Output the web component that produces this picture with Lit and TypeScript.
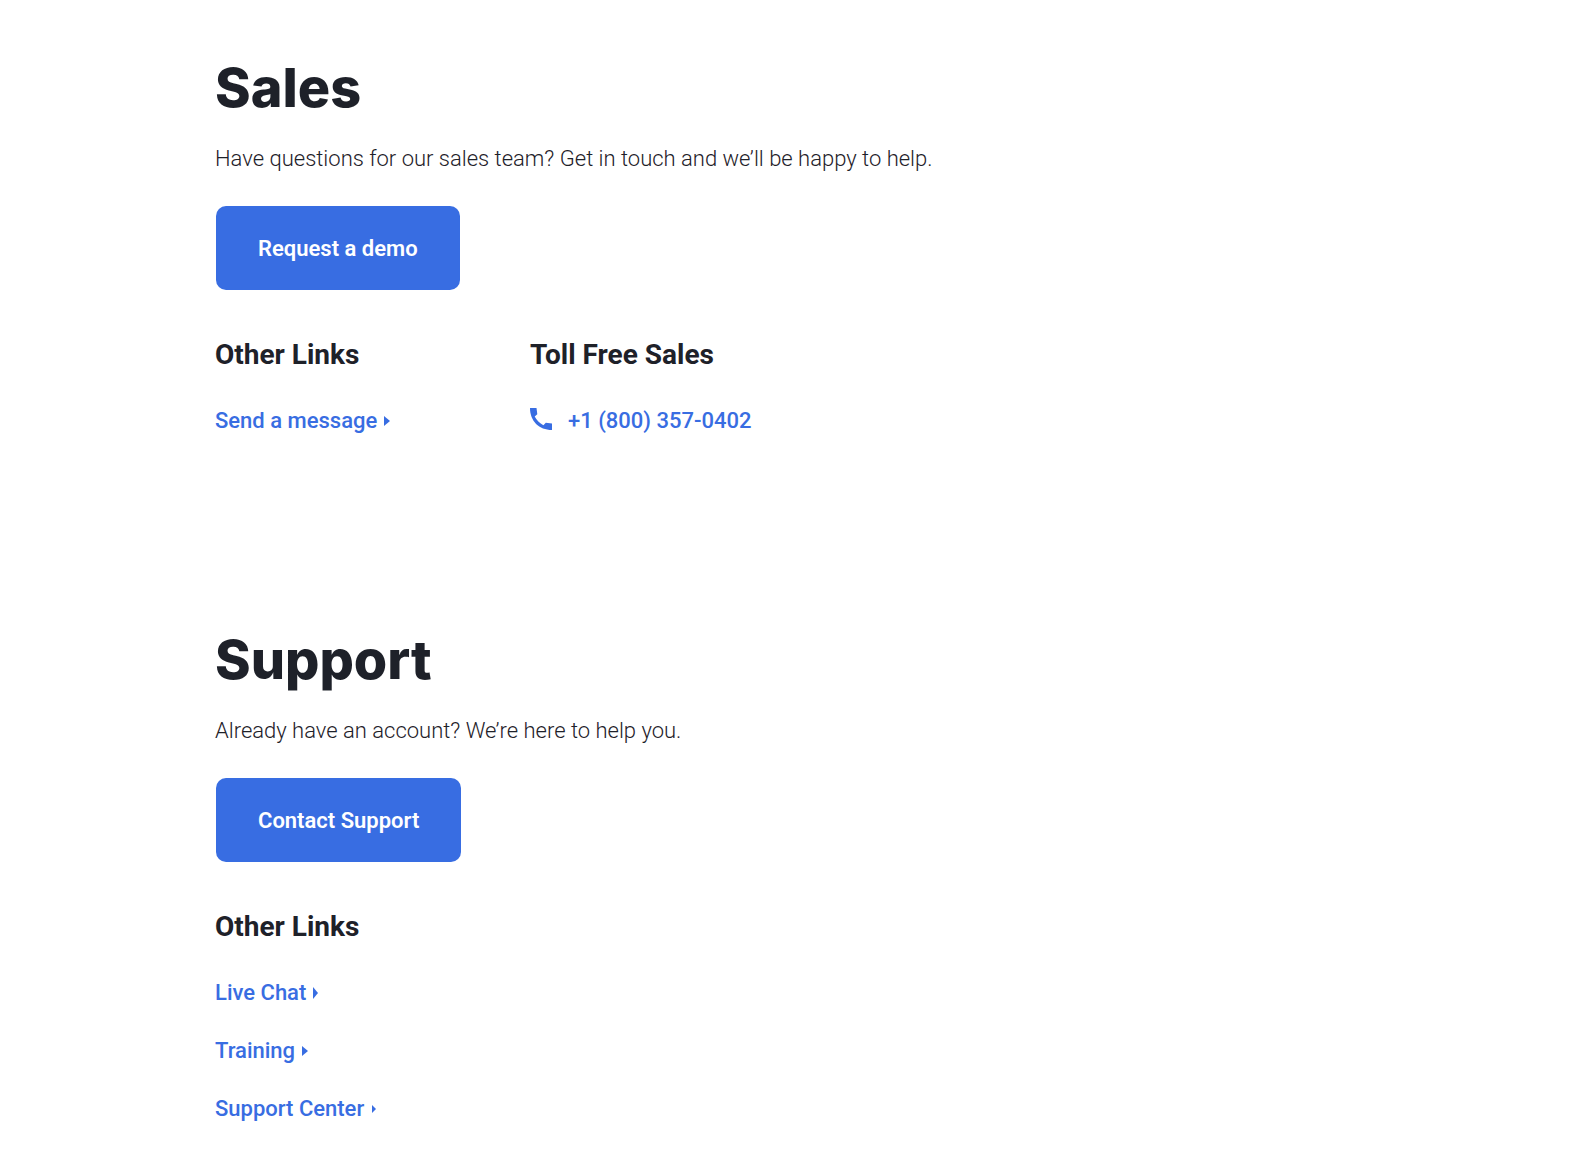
import { LitElement, html, css, svg } from "lit";
import { customElement, property } from "lit/decorators.js";

interface ArrowLink {
  label: string;
  href: string;
  arrow: string;
}

/* Arrow outlines in an 8 x 12 box. */
const ARROW_WIDE = "0,1 6,6 0,11";
const ARROW_TALL = "0,0 5,6 0,12";
const ARROW_SMALL = "1,2 5,6 1,10";

const salesLinks: ArrowLink[] = [
  { label: "Send a message", href: "#message", arrow: ARROW_WIDE },
];

const supportLinks: ArrowLink[] = [
  { label: "Live Chat", href: "#chat", arrow: ARROW_TALL },
  { label: "Training", href: "#training", arrow: ARROW_WIDE },
  { label: "Support Center", href: "#support-center", arrow: ARROW_SMALL },
];

@customElement("link-list")
export class LinkList extends LitElement {
  static styles = css`
    :host {
      display: block;
    }
    .list {
      display: grid;
      gap: 26px;
      margin: 0;
      padding: 0;
      list-style: none;
    }
    .link {
      display: inline-flex;
      align-items: center;
      gap: 7px;
      color: #386de2;
      font-size: 22px;
      line-height: 32px;
      font-weight: 500;
      text-decoration: none;
    }
    .link:hover {
      text-decoration: underline;
    }
    .item {
      display: flex;
    }
    .arrow {
      width: 8px;
      height: 12px;
      fill: currentColor;
    }
  `;

  @property({ attribute: false }) links: ArrowLink[] = [];

  render() {
    return html`
      <ul class="list">
        ${this.links.map(
          (l) => html`<li class="item">
            <a class="link" href=${l.href}
              >${l.label}<svg class="arrow" viewBox="0 0 8 12" aria-hidden="true">
                ${svg`<polygon points=${l.arrow}></polygon>`}
              </svg></a
            >
          </li>`
        )}
      </ul>
    `;
  }
}

@customElement("app-root")
export class AppRoot extends LitElement {
  static styles = css`
    :host {
      display: block;
      background: #fff;
      color: #1e2129;
      font-family: Roboto, "Noto Sans", sans-serif;
    }
    .page {
      padding: 52px 24px 32px 215px;
    }
    .section + .section {
      margin-top: 187px;
    }
    .title {
      margin: 0;
      font-family: Inter, sans-serif;
      font-size: 54px;
      line-height: 72px;
      font-weight: 800;
    }
    .lead {
      margin: 19px 0 0;
      font-size: 22px;
      line-height: 32px;
      font-weight: 300;
    }
    .button {
      display: inline-flex;
      align-items: center;
      justify-content: center;
      box-sizing: border-box;
      height: 84px;
      margin: 31px 0 0 1px;
      padding: 2px 42px 0;
      border: 0;
      border-radius: 10px;
      background: #386de2;
      color: #fff;
      font: inherit;
      font-size: 22px;
      line-height: 32px;
      font-weight: 600;
      cursor: pointer;
    }
    .columns {
      display: grid;
      grid-template-columns: repeat(2, 315px);
      margin-top: 48px;
    }
    .subtitle {
      margin: 0 0 33px;
      font-size: 28px;
      line-height: 34px;
      font-weight: 700;
    }
    .phone {
      display: inline-flex;
      align-items: flex-start;
      gap: 16px;
      color: #386de2;
      font-size: 22px;
      line-height: 32px;
      font-weight: 500;
      text-decoration: none;
    }
    .phone-icon {
      width: 22px;
      height: 22px;
      padding-top: 3px;
      fill: currentColor;
    }
  `;

  render() {
    return html`
      <main class="page">
        <section class="section" aria-labelledby="sales">
          <h1 class="title" id="sales">Sales</h1>
          <p class="lead">
            Have questions for our sales team? Get in touch and we’ll be happy to help.
          </p>
          <button class="button" type="button">Request a demo</button>
          <div class="columns">
            <div>
              <h2 class="subtitle">Other Links</h2>
              <link-list .links=${salesLinks}></link-list>
            </div>
            <div>
              <h2 class="subtitle">Toll Free Sales</h2>
              <a class="phone" href="tel:+18003570402">
                <svg class="phone-icon" viewBox="0 0 22 22" aria-hidden="true">
                  <path
                    d="M0 0H6.5L7.3 6.2 4.7 8.6C6.4 12 9.8 15.6 13.4 17.3L15.8 14.7 22 15.5V22C9 22 0 13 0 0z"
                  ></path>
                </svg>
                <span>+1 (800) 357-0402</span>
              </a>
            </div>
          </div>
        </section>
        <section class="section" aria-labelledby="support">
          <h1 class="title" id="support">Support</h1>
          <p class="lead">Already have an account? We’re here to help you.</p>
          <button class="button" type="button">Contact Support</button>
          <div class="columns">
            <div>
              <h2 class="subtitle">Other Links</h2>
              <link-list .links=${supportLinks}></link-list>
            </div>
          </div>
        </section>
      </main>
    `;
  }
}
